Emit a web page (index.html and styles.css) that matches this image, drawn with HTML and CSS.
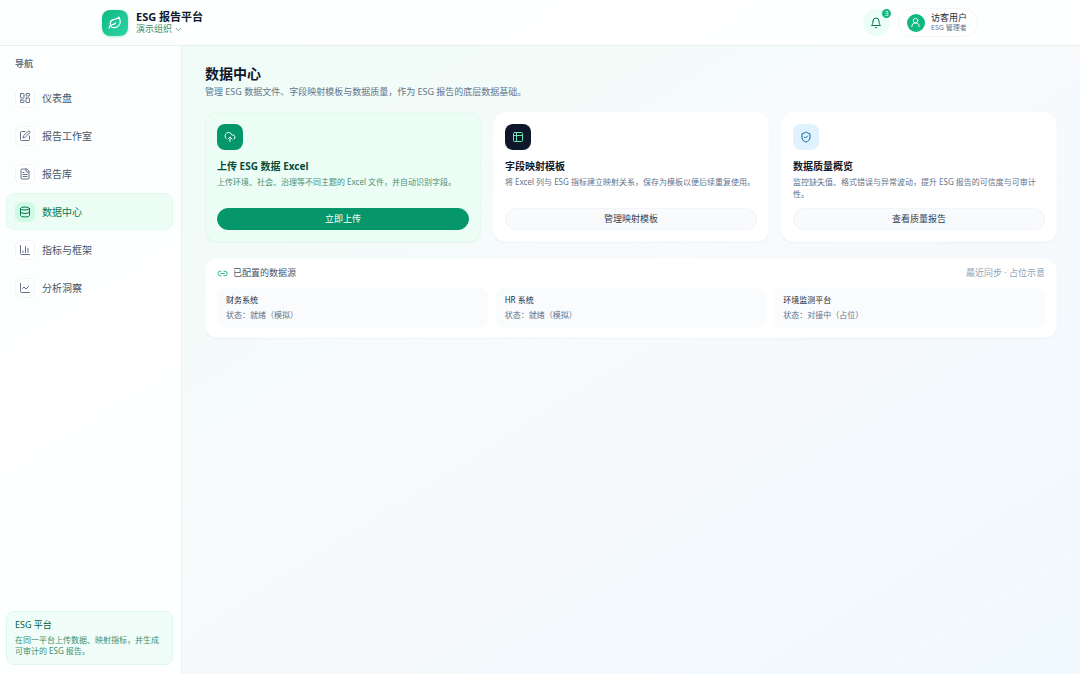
FILE: index.html
```html
<!DOCTYPE html>
<html lang="zh-CN">
  <head>
    <meta charset="UTF-8" />
    <meta name="viewport" content="width=device-width, initial-scale=1.0" />
    <title>数据中心 - ESG 报告平台</title>
    <link rel="stylesheet" href="styles.css">
  </head>
  <body>
    <header class="header">
      <div class="header-inner">
        <div class="brand">
          <span class="brand-logo">
            <svg class="icon icon-lg" viewBox="0 0 24 24"><path d="M11 20A7 7 0 0 1 9.8 6.1C15.5 5 17 4.48 19 2c1 2 2 4.18 2 8 0 5.5-4.78 10-10 10Z"/><path d="M2 21c0-3 1.85-5.36 5.08-6C9.5 14.52 12 13 13 12"/></svg>
          </span>
          <div>
            <div class="brand-name">ESG 报告平台</div>
            <button class="org-switch">
              演示组织
              <svg class="icon icon-xs" viewBox="0 0 24 24"><path d="m6 9 6 6 6-6"/></svg>
            </button>
          </div>
        </div>

        <div class="header-actions">
          <button class="bell" aria-label="通知">
            <svg class="icon icon-md" viewBox="0 0 24 24"><path d="M6 8a6 6 0 0 1 12 0c0 7 3 9 3 9H3s3-2 3-9"/><path d="M10.3 21a1.94 1.94 0 0 0 3.4 0"/></svg>
            <span class="badge">3</span>
          </button>
          <button class="user">
            <span class="avatar">
              <svg class="icon icon-sm" viewBox="0 0 24 24"><circle cx="12" cy="8" r="5"/><path d="M20 21a8 8 0 0 0-16 0"/></svg>
            </span>
            <span>
              <span class="user-name">访客用户</span>
              <span class="user-role">ESG 管理者</span>
            </span>
          </button>
        </div>
      </div>
    </header>

    <div class="layout">
      <aside class="sidebar">
        <div class="nav-title">导航</div>
        <nav class="nav">
          <a href="#" class="nav-item">
            <span class="nav-icon"><svg class="icon icon-md" viewBox="0 0 24 24"><rect x="3" y="3" width="7" height="9" rx="1"/><rect x="14" y="3" width="7" height="5" rx="1"/><rect x="14" y="12" width="7" height="9" rx="1"/><rect x="3" y="16" width="7" height="5" rx="1"/></svg></span>
            仪表盘
          </a>
          <a href="#" class="nav-item">
            <span class="nav-icon"><svg class="icon icon-md" viewBox="0 0 24 24"><path d="M12 3H5a2 2 0 0 0-2 2v14a2 2 0 0 0 2 2h14a2 2 0 0 0 2-2v-7"/><path d="M18.4 2.6a2.1 2.1 0 0 1 3 3L12 15l-4 1 1-4Z"/></svg></span>
            报告工作室
          </a>
          <a href="#" class="nav-item">
            <span class="nav-icon"><svg class="icon icon-md" viewBox="0 0 24 24"><path d="M15 2H6a2 2 0 0 0-2 2v16a2 2 0 0 0 2 2h12a2 2 0 0 0 2-2V7Z"/><path d="M14 2v4a2 2 0 0 0 2 2h4"/><path d="M10 9H8"/><path d="M16 13H8"/><path d="M16 17H8"/></svg></span>
            报告库
          </a>
          <a href="#" class="nav-item active">
            <span class="nav-icon"><svg class="icon icon-md" viewBox="0 0 24 24"><ellipse cx="12" cy="5" rx="9" ry="3"/><path d="M3 5v14a9 3 0 0 0 18 0V5"/><path d="M3 12a9 3 0 0 0 18 0"/></svg></span>
            数据中心
          </a>
          <a href="#" class="nav-item">
            <span class="nav-icon"><svg class="icon icon-md" viewBox="0 0 24 24"><path d="M3 3v16a2 2 0 0 0 2 2h16"/><path d="M18 17V9"/><path d="M13 17V5"/><path d="M8 17v-3"/></svg></span>
            指标与框架
          </a>
          <a href="#" class="nav-item">
            <span class="nav-icon"><svg class="icon icon-md" viewBox="0 0 24 24"><path d="M3 3v16a2 2 0 0 0 2 2h16"/><path d="m19 9-5 5-4-4-3 3"/></svg></span>
            分析洞察
          </a>
        </nav>
        <div class="side-note">
          <div class="side-note-title">ESG 平台</div>
          <p>在同一平台上传数据、映射指标，并生成可审计的 ESG 报告。</p>
        </div>
      </aside>

      <main class="content">
        <h1>数据中心</h1>
        <p class="description">
          管理 ESG 数据文件、字段映射模板与数据质量，作为 ESG 报告的底层数据基础。
        </p>

        <div class="cards">
          <section class="card card-green">
            <span class="card-icon">
              <svg class="icon icon-md" viewBox="0 0 24 24"><path d="M4 14.9A7 7 0 1 1 15.7 8h1.8a4.5 4.5 0 0 1 2.5 8.2"/><path d="M12 12v9"/><path d="m16 16-4-4-4 4"/></svg>
            </span>
            <h2>上传 ESG 数据 Excel</h2>
            <p>上传环境、社会、治理等不同主题的 Excel 文件，并自动识别字段。</p>
            <button class="btn btn-primary">立即上传</button>
          </section>

          <section class="card">
            <span class="card-icon card-icon-dark">
              <svg class="icon icon-md" viewBox="0 0 24 24"><rect x="3" y="3" width="18" height="18" rx="2"/><path d="M3 9h18"/><path d="M9 3v18"/></svg>
            </span>
            <h2>字段映射模板</h2>
            <p>将 Excel 列与 ESG 指标建立映射关系，保存为模板以便后续重复使用。</p>
            <button class="btn">管理映射模板</button>
          </section>

          <section class="card">
            <span class="card-icon card-icon-blue">
              <svg class="icon icon-md" viewBox="0 0 24 24"><path d="M20 13c0 5-3.5 7.5-7.7 9a1 1 0 0 1-.6 0C7.5 20.5 4 18 4 13V6a1 1 0 0 1 1-1c2 0 4.5-1.2 6.2-2.7a1.2 1.2 0 0 1 1.6 0C14.5 3.8 17 5 19 5a1 1 0 0 1 1 1z"/><path d="m9 12 2 2 4-4"/></svg>
            </span>
            <h2>数据质量概览</h2>
            <p>监控缺失值、格式错误与异常波动，提升 ESG 报告的可信度与可审计性。</p>
            <button class="btn">查看质量报告</button>
          </section>
        </div>

        <section class="sources">
          <div class="sources-head">
            <h3>
              <svg class="icon icon-sm" viewBox="0 0 24 24"><path d="M9 17H7A5 5 0 0 1 7 7h2"/><path d="M15 7h2a5 5 0 1 1 0 10h-2"/><path d="M8 12h8"/></svg>
              已配置的数据源
            </h3>
            <span class="sync">最近同步 · 占位示意</span>
          </div>
          <div class="source-list">
            <div class="source">
              <div class="source-name">财务系统</div>
              <div>状态：就绪（模拟）</div>
            </div>
            <div class="source">
              <div class="source-name">HR 系统</div>
              <div>状态：就绪（模拟）</div>
            </div>
            <div class="source">
              <div class="source-name">环境监测平台</div>
              <div>状态：对接中（占位）</div>
            </div>
          </div>
        </section>
      </main>
    </div>
  </body>
</html>
```

FILE: styles.css
```css
* {
  box-sizing: border-box;
  margin: 0;
  padding: 0;
}

body {
  display: flex;
  flex-direction: column;
  min-height: 100vh;
  font-family: "Noto Sans", "Noto Sans CJK SC", sans-serif;
  font-size: 8px;
  line-height: 12px;
  color: #64748b;
  background: linear-gradient(to bottom right, #ecfdf5, #f8fafc 50%, #f0f9ff);
}

button {
  font: inherit;
  color: inherit;
  background: none;
  border: none;
  cursor: pointer;
}

a {
  color: inherit;
  text-decoration: none;
}

.icon {
  display: block;
  flex-shrink: 0;
  fill: none;
  stroke: currentColor;
  stroke-width: 2;
  stroke-linecap: round;
  stroke-linejoin: round;
}

.icon-xs {
  width: 9px;
  height: 9px;
}

.icon-sm {
  width: 11px;
  height: 11px;
}

.icon-md {
  width: 12px;
  height: 12px;
}

.icon-lg {
  width: 14px;
  height: 14px;
}

/* Header */
.header {
  background: rgba(255, 255, 255, 0.85);
  border-bottom: 1px solid #e8f0f0;
}

.header-inner {
  display: flex;
  align-items: center;
  justify-content: space-between;
  max-width: 900px;
  height: 45px;
  margin: 0 auto;
  padding: 0 12px;
}

.brand,
.header-actions {
  display: flex;
  align-items: center;
  gap: 8px;
}

.brand-logo {
  display: flex;
  align-items: center;
  justify-content: center;
  width: 26px;
  height: 26px;
  border-radius: 8px;
  color: white;
  background: linear-gradient(to bottom right, #10b981, #2dd4a7);
  box-shadow: 0 1px 3px rgba(16, 185, 129, 0.3);
}

.brand-name {
  font-size: 11px;
  font-weight: 700;
  line-height: 13px;
  color: #0f172a;
}

.org-switch {
  display: flex;
  align-items: center;
  gap: 2px;
  font-size: 9px;
  color: #3f8f70;
}

.bell {
  position: relative;
  display: flex;
  align-items: center;
  justify-content: center;
  width: 27px;
  height: 27px;
  border-radius: 50%;
  color: #047857;
  background: #ecfdf5;
}

.badge {
  position: absolute;
  top: 0;
  right: -1px;
  width: 9px;
  height: 9px;
  border-radius: 50%;
  font-size: 7px;
  line-height: 9px;
  color: white;
  background: #10b981;
}

.user {
  display: flex;
  align-items: center;
  gap: 6px;
  height: 29px;
  padding: 0 10px 0 8px;
  border: 1px solid #f3f6f9;
  border-radius: 15px;
  text-align: left;
  background: white;
}

.avatar {
  display: flex;
  align-items: center;
  justify-content: center;
  width: 18px;
  height: 18px;
  border-radius: 50%;
  color: white;
  background: #10b981;
}

.user-name,
.user-role {
  display: block;
}

.user-name {
  font-size: 9px;
  line-height: 10px;
  color: #1e293b;
}

.user-role {
  font-size: 7px;
  line-height: 10px;
}

/* Sidebar */
.layout {
  display: flex;
  flex: 1;
}

.sidebar {
  display: flex;
  flex-direction: column;
  flex-shrink: 0;
  width: 182px;
  padding: 12px 8px 9px 6px;
  background: rgba(255, 255, 255, 0.85);
  border-right: 1px solid #e8f0f0;
}

.nav-title {
  margin-bottom: 9px;
  padding-left: 9px;
  font-size: 9px;
  font-weight: 700;
}

.nav {
  display: flex;
  flex-direction: column;
  gap: 1px;
}

.nav-item {
  display: flex;
  align-items: center;
  gap: 7px;
  height: 37px;
  padding: 0 8px;
  border: 1px solid transparent;
  border-radius: 8px;
  font-size: 10px;
  color: #475569;
}

.nav-icon {
  display: flex;
  align-items: center;
  justify-content: center;
  width: 20px;
  height: 20px;
  border: 1px solid #f1f5f9;
  border-radius: 6px;
  color: #64748b;
  background: white;
}

.nav-item.active {
  color: #047857;
  background: #ecfdf5;
  border-color: #e2faef;
}

.nav-item.active .nav-icon {
  color: #047857;
  background: #d1fae5;
  border-color: #d1fae5;
}

.side-note {
  margin-top: auto;
  padding: 6px 8px 8px;
  border: 1px solid #dcfaec;
  border-radius: 8px;
  line-height: 11px;
  color: #3f8f70;
  background: #f0fdf8;
}

.side-note-title {
  margin-bottom: 2px;
  font-size: 9px;
  line-height: 14px;
  color: #065f46;
}

/* Content */
.content {
  flex: 1;
  padding: 18px 23px;
}

h1 {
  margin-bottom: 2px;
  font-size: 14px;
  line-height: 20px;
  color: #0f172a;
}

.description {
  margin-bottom: 14px;
  font-size: 9px;
}

.cards {
  display: grid;
  grid-template-columns: repeat(3, 1fr);
  gap: 12px;
  margin-bottom: 16px;
}

.card,
.sources {
  border: 1px solid #fcfdfe;
  border-radius: 12px;
  background: white;
  box-shadow: 0 1px 2px rgba(15, 23, 42, 0.04);
}

.card {
  display: flex;
  flex-direction: column;
  padding: 11px;
}

.card-icon {
  display: flex;
  align-items: center;
  justify-content: center;
  width: 26px;
  height: 26px;
  margin-bottom: 9px;
  border-radius: 8px;
  color: white;
  background: #059669;
}

.card-icon-dark {
  color: #6ee7b7;
  background: #0f172a;
}

.card-icon-blue {
  color: #0369a1;
  background: #e0f2fe;
}

h2 {
  margin-bottom: 3px;
  font-size: 10px;
  line-height: 14px;
  color: #0f172a;
}

.card p {
  min-height: 24px;
  margin-bottom: 8px;
}

.card-green {
  background: #ecfdf5;
  border-color: #e6faf1;
}

.card-green h2 {
  color: #064e3b;
}

.card-green p {
  color: #4b8f76;
}

.btn {
  height: 22px;
  margin-top: auto;
  border: 1px solid #f1f5f9;
  border-radius: 11px;
  font-size: 9px;
  color: #334155;
  background: #f8fafc;
}

.btn-primary {
  color: white;
  background: #059669;
  border-color: #059669;
}

/* Data sources */
.sources {
  padding: 8px 11px 9px;
}

.sources-head {
  display: flex;
  align-items: center;
  justify-content: space-between;
  margin-bottom: 9px;
  font-size: 9px;
}

h3 {
  display: flex;
  align-items: center;
  gap: 5px;
  font-size: 9px;
  font-weight: 400;
  color: #475569;
}

h3 .icon {
  color: #10b981;
}

.sync {
  color: #94a3b8;
}

.source-list {
  display: grid;
  grid-template-columns: repeat(3, 1fr);
  gap: 8px;
}

.source {
  padding: 4px 9px 6px;
  border-radius: 8px;
  line-height: 15px;
  background: #f9fbfc;
}

.source-name {
  color: #1e293b;
}
```
